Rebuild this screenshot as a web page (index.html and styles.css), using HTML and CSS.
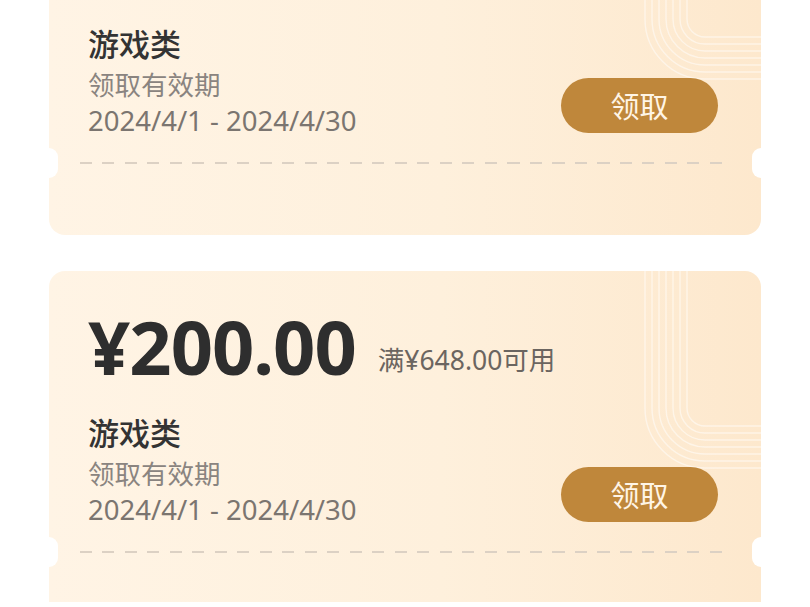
FILE: index.html
```html
<!DOCTYPE html>
<html lang="zh-CN">
<head>
<meta charset="utf-8">
<title>优惠券</title>
<link rel="stylesheet" href="styles.css">
</head>
<body>
<div class="viewport">
  <div class="list">
    <div class="card">
      <svg class="deco" width="200" height="210" viewBox="512 0 200 210" aria-hidden="true">
        <path d="M638 0 V137 A18 18 0 0 0 656 155 H712"/>
        <path d="M631 0 V137 A25 25 0 0 0 656 162 H712"/>
        <path d="M624 0 V137 A32 32 0 0 0 656 169 H712"/>
        <path d="M617 0 V137 A39 39 0 0 0 656 176 H712"/>
        <path d="M610 0 V137 A46 46 0 0 0 656 183 H712"/>
        <path d="M603 0 V137 A53 53 0 0 0 656 190 H712"/>
        <path d="M596 0 V137 A60 60 0 0 0 656 197 H712"/>
      </svg>
      <div class="body">
        <div class="amount-row">
          <span class="amount">¥200.00</span>
          <span class="cond">满¥648.00可用</span>
        </div>
        <div class="info-row">
          <div class="info">
            <div class="title">游戏类</div>
            <div class="sub">领取有效期</div>
            <div class="date">2024/4/1 - 2024/4/30</div>
          </div>
          <button class="btn">领取</button>
        </div>
      </div>
      <div class="divider"><span class="dash"></span></div>
    </div>
    <div class="card">
      <svg class="deco" width="200" height="210" viewBox="512 0 200 210" aria-hidden="true">
        <path d="M638 0 V137 A18 18 0 0 0 656 155 H712"/>
        <path d="M631 0 V137 A25 25 0 0 0 656 162 H712"/>
        <path d="M624 0 V137 A32 32 0 0 0 656 169 H712"/>
        <path d="M617 0 V137 A39 39 0 0 0 656 176 H712"/>
        <path d="M610 0 V137 A46 46 0 0 0 656 183 H712"/>
        <path d="M603 0 V137 A53 53 0 0 0 656 190 H712"/>
        <path d="M596 0 V137 A60 60 0 0 0 656 197 H712"/>
      </svg>
      <div class="body">
        <div class="amount-row">
          <span class="amount">¥200.00</span>
          <span class="cond">满¥648.00可用</span>
        </div>
        <div class="info-row">
          <div class="info">
            <div class="title">游戏类</div>
            <div class="sub">领取有效期</div>
            <div class="date">2024/4/1 - 2024/4/30</div>
          </div>
          <button class="btn">领取</button>
        </div>
      </div>
      <div class="divider"><span class="dash"></span></div>
    </div>
  </div>
</div>
</body>
</html>
```

FILE: styles.css
```css
* { box-sizing: border-box; }
html, body {
  margin: 0;
  padding: 0;
  background: #ffffff;
}
body {
  font-family: "Noto Sans", "Noto Sans CJK SC", sans-serif;
}
.viewport {
  height: 602px;
  overflow: hidden;
}
.list {
  display: flex;
  flex-direction: column;
  gap: 36px;
  margin-top: -118px;
  padding-left: 49px;
}
.card {
  position: relative;
  width: 712px;
  height: 353px;
  border-radius: 16px;
  background: linear-gradient(90deg, #fff4e5 0%, #fef0dc 55%, #fde8cd 100%);
  overflow: hidden;
}
.deco {
  position: absolute;
  top: 0;
  right: 0;
  fill: none;
  stroke: #ffffff;
  stroke-width: 1.4;
  opacity: 0.5;
}
.body {
  position: relative;
  padding: 0 43px 0 39px;
}
.amount-row {
  display: flex;
  align-items: flex-end;
  gap: 22px;
  margin-top: 40px;
  height: 72px;
}
.amount {
  font-size: 74px;
  font-weight: 700;
  line-height: 72px;
  color: #2e2e2e;
  letter-spacing: -1px;
}
.cond {
  font-size: 26.5px;
  line-height: 30px;
  padding-bottom: 8px;
  color: #6b6560;
}
.info-row {
  display: flex;
  justify-content: space-between;
  align-items: flex-end;
  margin-top: 30px;
}
.info {
  display: flex;
  flex-direction: column;
}
.title {
  font-size: 31px;
  line-height: 40px;
  color: #333333;
  font-weight: 500;
}
.sub {
  margin-top: 3px;
  font-size: 26.5px;
  line-height: 36px;
  color: #8a8480;
}
.date {
  font-size: 27.5px;
  line-height: 36px;
  color: #7b7570;
}
.btn {
  width: 157px;
  height: 55px;
  margin-bottom: 6px;
  border: none;
  border-radius: 28px;
  background: #bf873b;
  color: #fff5e6;
  font-family: "Noto Sans CJK SC", sans-serif;
  font-size: 29px;
  line-height: 55px;
  padding: 0;
}
.divider {
  position: relative;
  margin-top: 23px;
  height: 2px;
  padding: 0 39px 0 31px;
}
.dash {
  display: block;
  height: 2px;
  background: repeating-linear-gradient(90deg, #dcd1c4 0 12px, transparent 12px 22.5px);
}
.divider::before,
.divider::after {
  content: "";
  position: absolute;
  top: -14px;
  width: 18px;
  height: 30px;
  border-radius: 9px;
  background: #ffffff;
}
.divider::before { left: -9px; }
.divider::after { right: -9px; }
```
